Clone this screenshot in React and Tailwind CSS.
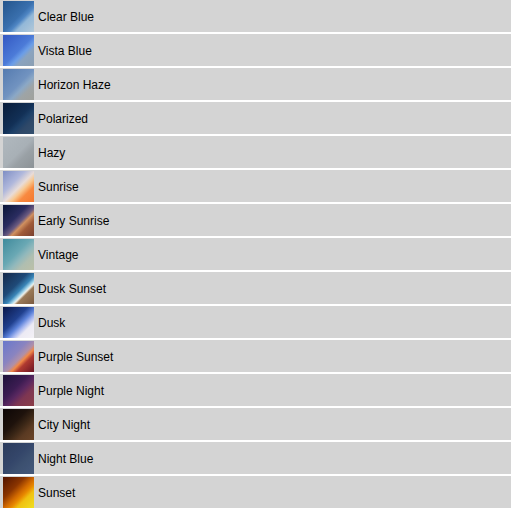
const presets = [
  { name: "Clear Blue", bg: "bg-[linear-gradient(135deg,#24558c_0%,#3a70ae_50%,#4f86c4_60%,#93b8d8_70%,#b3c9d9_100%)]" },
  { name: "Vista Blue", bg: "bg-[linear-gradient(135deg,#3358c2_0%,#4c7bd8_50%,#6b9ee8_62%,#8aa3bf_72%,#8b9fb2_100%)]" },
  { name: "Horizon Haze", bg: "bg-[linear-gradient(135deg,#557bb0_0%,#7193c0_50%,#8ba8c6_62%,#9ea4a6_75%,#a0a19c_100%)]" },
  { name: "Polarized", bg: "bg-[linear-gradient(135deg,#0a1d3a_0%,#123056_50%,#1d4068_62%,#2e4868_75%,#34506e_100%)]" },
  { name: "Hazy", bg: "bg-[linear-gradient(135deg,#b0b8be_0%,#a8b0b6_50%,#9aa1a6_65%,#8c9296_100%)]" },
  { name: "Sunrise", bg: "bg-[linear-gradient(135deg,#7e8ec4_0%,#b0b8dc_35%,#e8dcd8_52%,#f8c890_62%,#f88a40_75%,#f47830_100%)]" },
  { name: "Early Sunrise", bg: "bg-[linear-gradient(135deg,#0a1638_0%,#2a2c60_40%,#6a5a80_55%,#d09060_63%,#a05a38_75%,#7a4030_100%)]" },
  { name: "Vintage", bg: "bg-[linear-gradient(135deg,#3f8a9c_0%,#6aa8b4_45%,#90b8bc_60%,#b0beb0_75%,#bcc0a8_100%)]" },
  { name: "Dusk Sunset", bg: "bg-[linear-gradient(135deg,#16294a_0%,#1f4a78_40%,#3a86b8_55%,#a8d8ec_63%,#f0f0e8_67%,#9a7a58_72%,#7a5a40_100%)]" },
  { name: "Dusk", bg: "bg-[linear-gradient(135deg,#0a184a_0%,#20408e_40%,#5a80d8_55%,#a8b8f0_65%,#eceaf4_75%,#f4f2f6_100%)]" },
  { name: "Purple Sunset", bg: "bg-[linear-gradient(135deg,#6878cc_0%,#8a84c0_40%,#b090a8_55%,#f08848_63%,#b03a30_72%,#6a1424_100%)]" },
  { name: "Purple Night", bg: "bg-[linear-gradient(135deg,#1e123a_0%,#3c1c52_40%,#5a2860_55%,#7e3652_70%,#8c3e48_100%)]" },
  { name: "City Night", bg: "bg-[linear-gradient(135deg,#0c0606_0%,#1e120c_40%,#3a2616_58%,#5a3a22_75%,#6a4428_100%)]" },
  { name: "Night Blue", bg: "bg-[linear-gradient(135deg,#2c3c5c_0%,#34466a_45%,#3c5070_65%,#44587a_100%)]" },
  { name: "Sunset", bg: "bg-[linear-gradient(135deg,#501400_0%,#8a3400_35%,#d06800_52%,#e88800_62%,#f0c010_72%,#f0e020_100%)]" },
];

const PresetRow = ({ preset }) => {
  return (
    <div className="flex items-center h-[34px] border-b-2 border-white bg-[#d4d4d4]">
      <div className={`ml-[3px] w-[31px] h-[31px] shrink-0 ${preset.bg}`} />
      <span className="ml-[4px] pt-[2px] text-[12px] text-black leading-none">{preset.name}</span>
    </div>
  );
};

const App = () => {
  return (
    <div className="w-[511px] h-[509px] overflow-hidden bg-[#d4d4d4] font-['Liberation_Sans',Arial,sans-serif]">
      {presets.map((p) => (
        <PresetRow key={p.name} preset={p} />
      ))}
    </div>
  );
};

export default App;
